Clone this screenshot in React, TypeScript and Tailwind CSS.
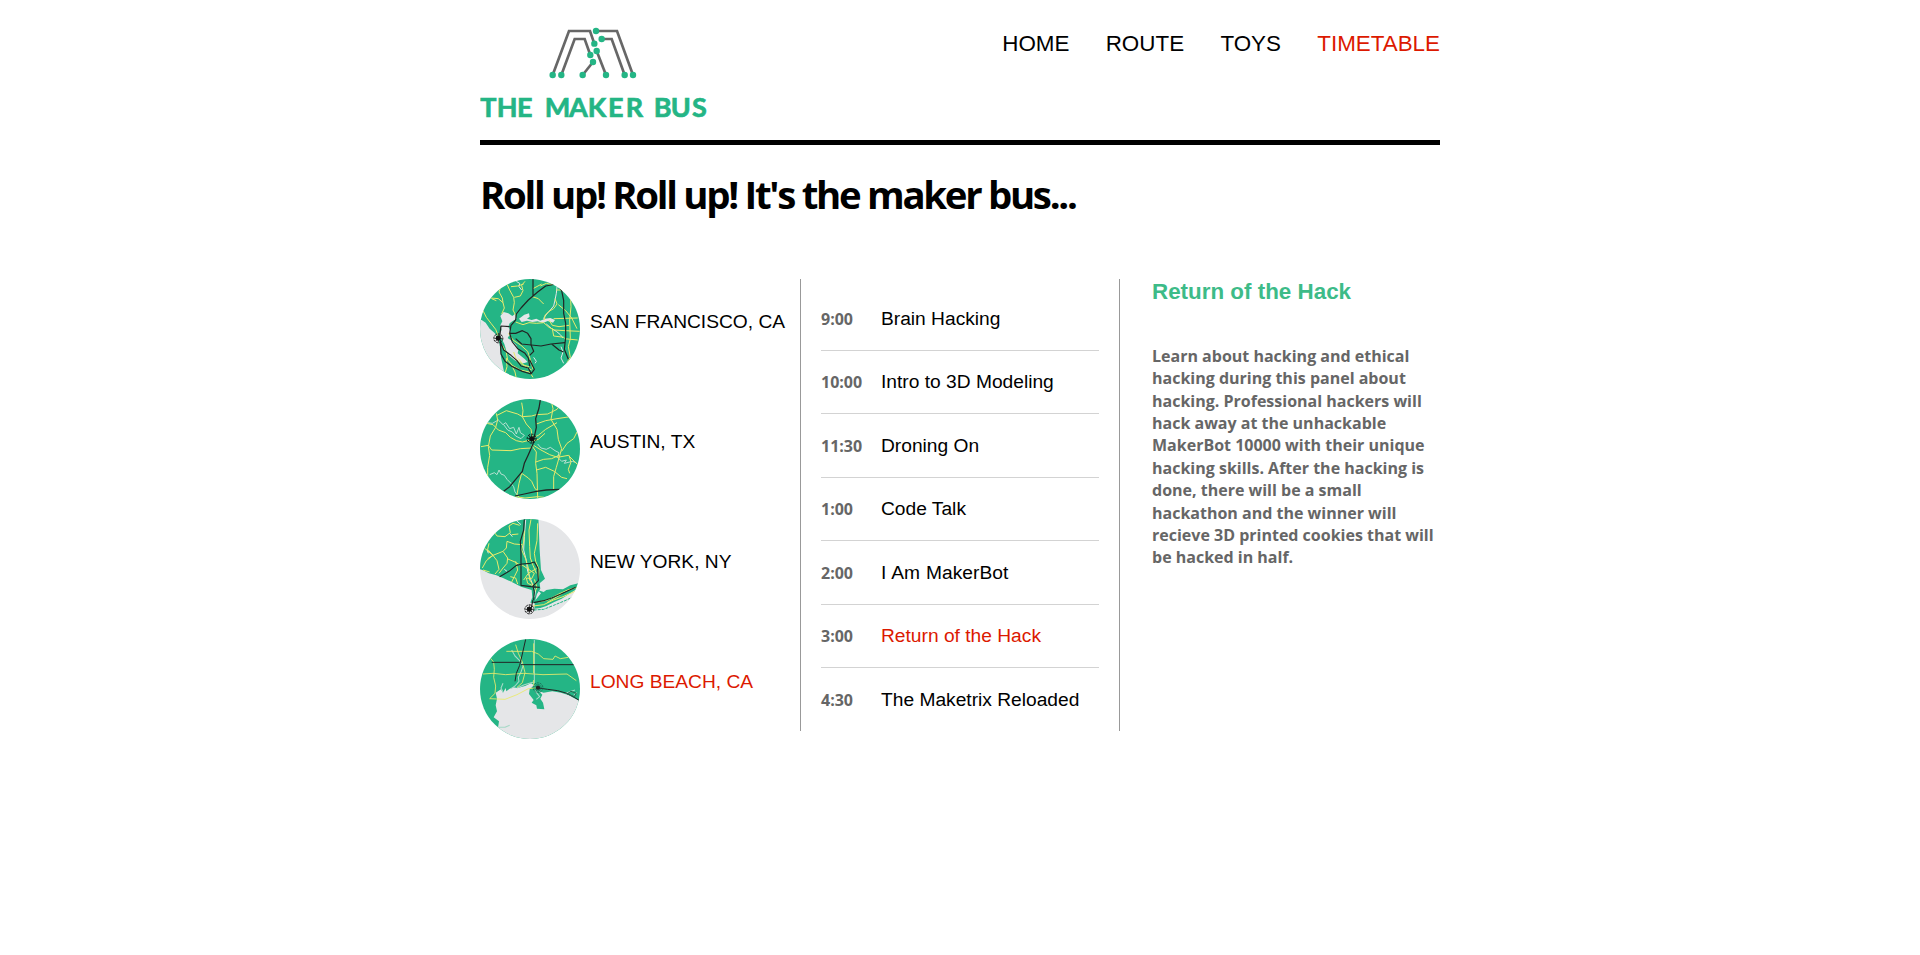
import type { ReactNode } from 'react';

const GREEN = '#24b585';
const GREY = '#e5e6e8';
const YELLOW = '#e9ea6b';
const DARK = '#222423';

function Logo() {
  const dots = [
    [378, 63], [395, 87], [373, 101], [380, 123], [361, 135], [369, 156],
    [248, 195], [274, 195], [338, 195], [408, 195], [464, 195], [489, 195],
  ];
  return (
    <svg className="block h-[110px] w-[236px]" viewBox="30 30 708 330" role="img" aria-label="The Maker Bus">
      <g fill="none" stroke="#676767" strokeWidth="8">
        <path d="M248 195L297 63H360L373 101" />
        <path d="M274 195L314 87H344L361 135" />
        <path d="M378 63H441L489 195" />
        <path d="M395 87H425L464 195" />
        <path d="M380 123L408 195" />
        <path d="M369 156L338 195" />
      </g>
      {dots.map(([x, y]) => (
        <circle key={`${x}-${y}`} cx={x} cy={y} r="9.6" fill={GREEN} />
      ))}
      <g fill={GREEN} stroke={GREEN} strokeWidth="2" fontFamily="Lato, sans-serif" fontWeight="700" fontSize="81">
        <text x="31 80 141" y="320">THE</text>
        <text x="224 297 353 414 467" y="320">MAKER</text>
        <text x="551 602 666" y="320">BUS</text>
      </g>
    </svg>
  );
}

function MapDisc({ id, base, children }: { id: string; base: string; children: ReactNode }) {
  return (
    <svg className="block size-[100px] shrink-0" viewBox="15 27 300 300" aria-hidden="true">
      <clipPath id={id}>
        <circle cx="165" cy="177" r="150" />
      </clipPath>
      <g clipPath={`url(#${id})`} fill="none" strokeLinejoin="round">
        <rect x="15" y="27" width="300" height="300" fill={base} />
        {children}
      </g>
    </svg>
  );
}

function Marker({ x, y }: { x: number; y: number }) {
  return (
    <g>
      <circle cx={x} cy={y} r="13.5" stroke="#111" strokeWidth="3" strokeDasharray="7 3" />
      <circle cx={x} cy={y} r="7.5" fill="#111" />
      <path d={`M${x - 12} ${y}h24M${x} ${y - 12}v24M${x - 8} ${y - 8}l16 16M${x + 8} ${y - 8}l-16 16`} stroke="#111" strokeWidth="2.4" />
    </g>
  );
}

function SanFrancisco() {
  return (
    <MapDisc id="map-sf" base={GREEN}>
      <path d="M0 150H20L32 158L44 176L58 188L68 200L72 214L76 236L78 262L84 290L92 330H0Z" fill={GREY} />
      <path d="M76 138L86 126L100 130L112 138L120 132L124 146L112 154L104 160L100 170L106 182L104 194L98 204L112 214L124 226L130 240L128 250L138 258L150 268L158 276L146 280L130 276L118 270L104 258L94 242L88 222L80 206L72 192L80 180L76 166L82 154Z" fill={GREY} />
      <path d="M132 146L148 134L162 130L164 140L156 146L170 150L184 146L196 152L210 146L226 144L240 150L234 158L218 153L204 159L188 154L172 156L156 152L140 156Z" fill={GREY} />
      <path d="M124 34L134 40L132 50L140 60M205 146L215 132L226 120L236 108L240 90L244 70L246 50M214 162L230 176L244 184L256 194L264 204M258 230L264 246L258 264L266 280M176 262L184 274L180 280" stroke={GREY} strokeWidth="3" />
      <g stroke={YELLOW} strokeWidth="3">
        <path d="M48 84L70 86L84 98L88 114L80 132M84 98L82 84L72 66L76 52M94 38L104 60L116 82L118 98L114 120L122 136M118 82L136 78L144 62L140 46L150 34" />
        <path d="M24 122L34 142L48 160L62 178L70 198M108 50L128 48L146 42M50 86L64 92" />
        <path d="M174 56L200 42M172 80L190 86L206 102M196 48L214 40L232 44M244 60L278 60M240 86L246 102L236 116L222 124L210 136L208 150" />
        <path d="M122 156L144 164L162 158L184 160L206 158L222 172L238 180L270 182L314 184M236 146L308 144M286 70L288 110L284 150L286 206L280 230L286 262L276 278M250 104L272 122L290 144L306 176M222 150L232 166L252 170L282 166M268 206L308 210M232 176L236 198L268 202" />
        <path d="M100 190L114 210L138 226L158 244L166 268L174 298M82 226L94 248L98 270L112 286L136 300L164 306L174 322M94 264L96 290L90 310M110 286L120 306L124 326M116 246L124 268L142 284L162 290M130 266L148 288L170 300" />
      </g>
      <g stroke={DARK} strokeWidth="3.6">
        <path d="M174 26L174 80M122 150L124 132L138 114L160 90L188 66L212 48L244 42L260 62L266 92L266 130L272 160L272 202L268 238L280 268" />
        <path d="M74 200L78 168L104 170M122 150L108 166L104 190L112 216L128 236L150 250L160 264L164 288M104 190L122 190L142 182L158 190L168 206L168 224L176 244L164 256" />
        <path d="M122 206L140 222L198 228L228 222L270 218M230 222L252 240L266 246" />
        <path d="M76 214L86 240L108 256L126 272L138 288L160 294L168 310M76 214L78 252L90 274L112 290L142 304L168 312L178 298L164 270" />
      </g>
      <Marker x={70} y={205} />
    </MapDisc>
  );
}

function Austin() {
  return (
    <MapDisc id="map-austin" base={GREEN}>
      <path d="M38 98L52 100L70 90L84 104L92 98L104 116L116 112L124 132L132 112L136 128L148 136L138 146L122 138L112 126L98 120L86 104M188 162L198 174L214 178L226 172L240 182L252 188L248 202L260 214L274 210L268 220L292 214L304 218M44 254L58 248L66 254L72 240L78 252L88 256L96 268L108 280L116 290L120 306L128 316" stroke="#bfe3d6" strokeWidth="2.8" />
      <g stroke={YELLOW} strokeWidth="3">
        <path d="M64 70L68 90L62 112L46 138L40 170L44 196L38 232L38 262M140 38L144 62L142 80L154 102L168 118L172 140M66 76L94 62L128 72L142 80L170 78L184 74L218 72L246 58L256 44M184 102L212 92L246 86L286 80" />
        <path d="M35 100L54 104L70 120L92 128L106 142L124 152L142 156L166 150M18 170L40 166L50 180L108 182L136 176L170 174M168 146L190 136L212 118L246 98M172 154L190 148L210 130" />
        <path d="M230 38L234 56L228 88L246 118L250 148L260 176L252 204L244 232L236 260L236 300M170 166L184 186L182 220L186 250L188 326M176 166L198 180L224 194L248 202L280 196L302 218L314 230M182 216L206 208L230 206L252 196M260 184L276 160L296 146L306 126M184 240L212 232L238 244L260 262L276 266M140 250L160 264L170 274L180 296L188 302M140 250L132 280L126 314L136 326" />
        <path d="M282 196L288 216L280 238L284 250M120 320L150 324L188 320L208 322" />
      </g>
      <path d="M196 30L192 54L182 86L184 112L178 140L174 162L160 194L148 220L142 244L122 268L104 290L86 304M120 318L148 312L184 304L214 300L254 298" stroke={DARK} strokeWidth="3.8" />
      <Marker x={170} y={146} />
    </MapDisc>
  );
}

function NewYork() {
  return (
    <MapDisc id="map-ny" base={GREY}>
      <path d="M15 20H190L192 70L194 120L198 180L210 206L194 220L196 236L186 252L182 266L180 280L166 278L172 262L170 240L138 230L106 214L84 204L64 196L42 190L22 180L10 176Z" fill={GREEN} />
      <path d="M180 272L198 250L188 240L206 246L214 240L238 236L264 238L286 226L310 220L304 238L282 252L260 266L238 276L214 288L196 294L178 296Z" fill={GREEN} />
      <path d="M176 300L206 298L236 286L270 272L296 260" stroke={GREEN} strokeWidth="3" strokeDasharray="9 3" />
      <path d="M152 30L148 80L146 120L154 152L158 184L170 216L178 238M120 28L138 44M36 118L40 130M88 178L96 184M104 70L112 80M182 240L178 262" stroke={GREY} strokeWidth="3" />
      <g stroke={YELLOW} strokeWidth="3">
        <path d="M168 28L162 60L164 110L166 144L174 166L184 190M188 40L186 92L178 130L182 154L192 178L190 206M148 62L146 96L140 120L152 146L160 174L164 210L176 226" />
        <path d="M52 58L66 78L90 80L106 68L102 48L114 40L134 46M28 114L54 136L84 124L94 114L96 94L118 102L142 104M52 134L66 152L72 178L60 192M54 136L34 152L22 174M84 124L98 144L96 160L84 174L72 190M96 146L120 156L140 168M38 146L54 136L38 118L42 100M110 74L130 72M106 200L122 204L128 222M122 154L128 180L118 200L110 216M24 180L44 186" />
        <path d="M140 164L158 176L178 190L170 206L154 204L158 220L176 228M146 210L160 190L184 176M178 208L186 232L180 244M174 288L206 284L236 270L264 260L304 242M190 276L218 270L252 252L278 240L306 232M216 278L260 252" />
      </g>
      <path d="M148 26L146 60L136 94L138 128L138 164L138 226L168 230L194 232M74 200L102 184L124 166L142 162L166 160L178 156L188 174L190 212L174 228L178 246L176 270M176 278L206 272L230 264L258 252L284 240L302 232M168 296L174 270" stroke={DARK} strokeWidth="3.4" />
      <Marker x={163} y={298} />
    </MapDisc>
  );
}

function LongBeach() {
  return (
    <MapDisc id="map-lb" base={GREEN}>
      <path d="M60 340L68 300L72 274L56 262L66 244L62 226L66 206L62 188L78 178L84 188L92 174L94 184L104 176L114 172L128 174L150 168L168 160L178 166L164 178L162 192L176 210L170 218L184 226L186 236L208 238L204 218L196 206L202 194L192 184L206 188L232 184L258 188L282 196L296 204L314 212V340Z" fill={GREY} />
      <path d="M110 60L120 78L134 92L144 108L138 126L130 142L132 154L120 168L108 176M84 160L78 174L84 186M178 30V160M126 174L148 164L176 156M180 182L194 200L184 208M272 190L300 180M296 196L306 188M70 292L90 292L104 286" stroke="#a5d9c6" strokeWidth="3.2" />
      <g stroke={YELLOW} strokeWidth="2.6">
        <path d="M42 80L56 96L58 118L56 142L62 168L60 190L44 206L90 208L126 194L160 176L182 174M94 64H170L190 72L206 86L234 88L240 78L256 86L280 82M24 132L54 130L92 134L146 130L204 134L276 132L304 152M122 44L130 70L142 96L150 128L142 158L126 172M176 40V130M176 150V168" />
      </g>
      <path d="M152 28L142 72L134 106L124 130L120 154M50 97H134M138 104H314M190 174L218 178L248 182L276 190L298 202L314 212" stroke={DARK} strokeWidth="3" />
      <path d="M276 192L288 184L304 190L298 200Z" stroke="#27634f" strokeWidth="3" />
      <g stroke="#1b5e4a" strokeWidth="2.4">
        <circle cx="189" cy="173" r="14.5" strokeDasharray="6 3" />
        <circle cx="189" cy="173" r="9.5" strokeDasharray="4 2" />
      </g>
      <circle cx="189" cy="173" r="6.5" fill={DARK} />
    </MapDisc>
  );
}

const nav = ['HOME', 'ROUTE', 'TOYS', 'TIMETABLE'];

const cities = [
  { name: 'SAN FRANCISCO, CA', Map: SanFrancisco },
  { name: 'AUSTIN, TX', Map: Austin },
  { name: 'NEW YORK, NY', Map: NewYork },
  { name: 'LONG BEACH, CA', Map: LongBeach, active: true },
];

const sessions = [
  { time: '9:00', title: 'Brain Hacking' },
  { time: '10:00', title: 'Intro to 3D Modeling' },
  { time: '11:30', title: 'Droning On' },
  { time: '1:00', title: 'Code Talk' },
  { time: '2:00', title: 'I Am MakerBot', tone: '[word-spacing:0.7px]' },
  { time: '3:00', title: 'Return of the Hack', tone: 'text-[#dc1900]' },
  { time: '4:30', title: 'The Maketrix Reloaded' },
];

export default function App() {
  return (
    <div className="mx-auto w-[960px] bg-white font-['Liberation_Sans',Arial,sans-serif] text-black">
      <header className="flex h-[145px] items-start justify-between border-b-5 border-black pt-5">
        <Logo />
        <nav className="flex gap-[36.3px] pt-[11px] text-[22.4px] leading-[26px]">
          {nav.map((item) => (
            <a key={item} className={item === 'TIMETABLE' ? 'text-[#dc1900]' : ''}>
              {item}
            </a>
          ))}
        </nav>
      </header>

      <h1 className="pt-[22px] font-['Open_Sans',sans-serif] text-[38.4px] leading-[54px] font-bold tracking-[-0.06em]">
        Roll up! Roll up! It's the maker bus...
      </h1>

      <main className="mt-[58px] flex items-start">
        <ul className="flex w-[320px] shrink-0 flex-col gap-5">
          {cities.map(({ name, Map, active }) => (
            <li key={name} className="flex gap-2.5">
              <Map />
              <span className={`pt-8 text-[19.2px] leading-[22px] whitespace-nowrap ${active ? 'text-[#dc1900]' : ''}`}>
                {name}
              </span>
            </li>
          ))}
        </ul>

        <ul className="h-[452px] w-[320px] shrink-0 border-x border-[#999] px-5 pt-[8.45px]">
          {sessions.map(({ time, title, tone }) => (
            <li key={time} className="flex h-[63.45px] items-baseline border-b border-[#d3d3d3] pt-[20.55px] last:border-b-0">
              <span className="w-[60px] font-['Open_Sans',sans-serif] text-base leading-[22px] font-bold text-[#666]">{time}</span>
              <span className={`text-[19.2px] leading-[22px] ${tone ?? ''}`}>{title}</span>
            </li>
          ))}
        </ul>

        <section className="ml-8 w-[288px]">
          <h2 className="text-[22.4px] leading-[25px] font-bold text-[#3dbb88]">Return of the Hack</h2>
          <p className="mt-[40.8px] font-['Open_Sans',sans-serif] text-base leading-[22.4px] font-bold text-[#666]">
            Learn about hacking and ethical hacking during this panel about hacking. Professional hackers will hack
            away at the unhackable MakerBot 10000 with their unique hacking skills. After the hacking is done, there
            will be a small hackathon and the winner will recieve 3D printed cookies that will be hacked in half.
          </p>
        </section>
      </main>
    </div>
  );
}
